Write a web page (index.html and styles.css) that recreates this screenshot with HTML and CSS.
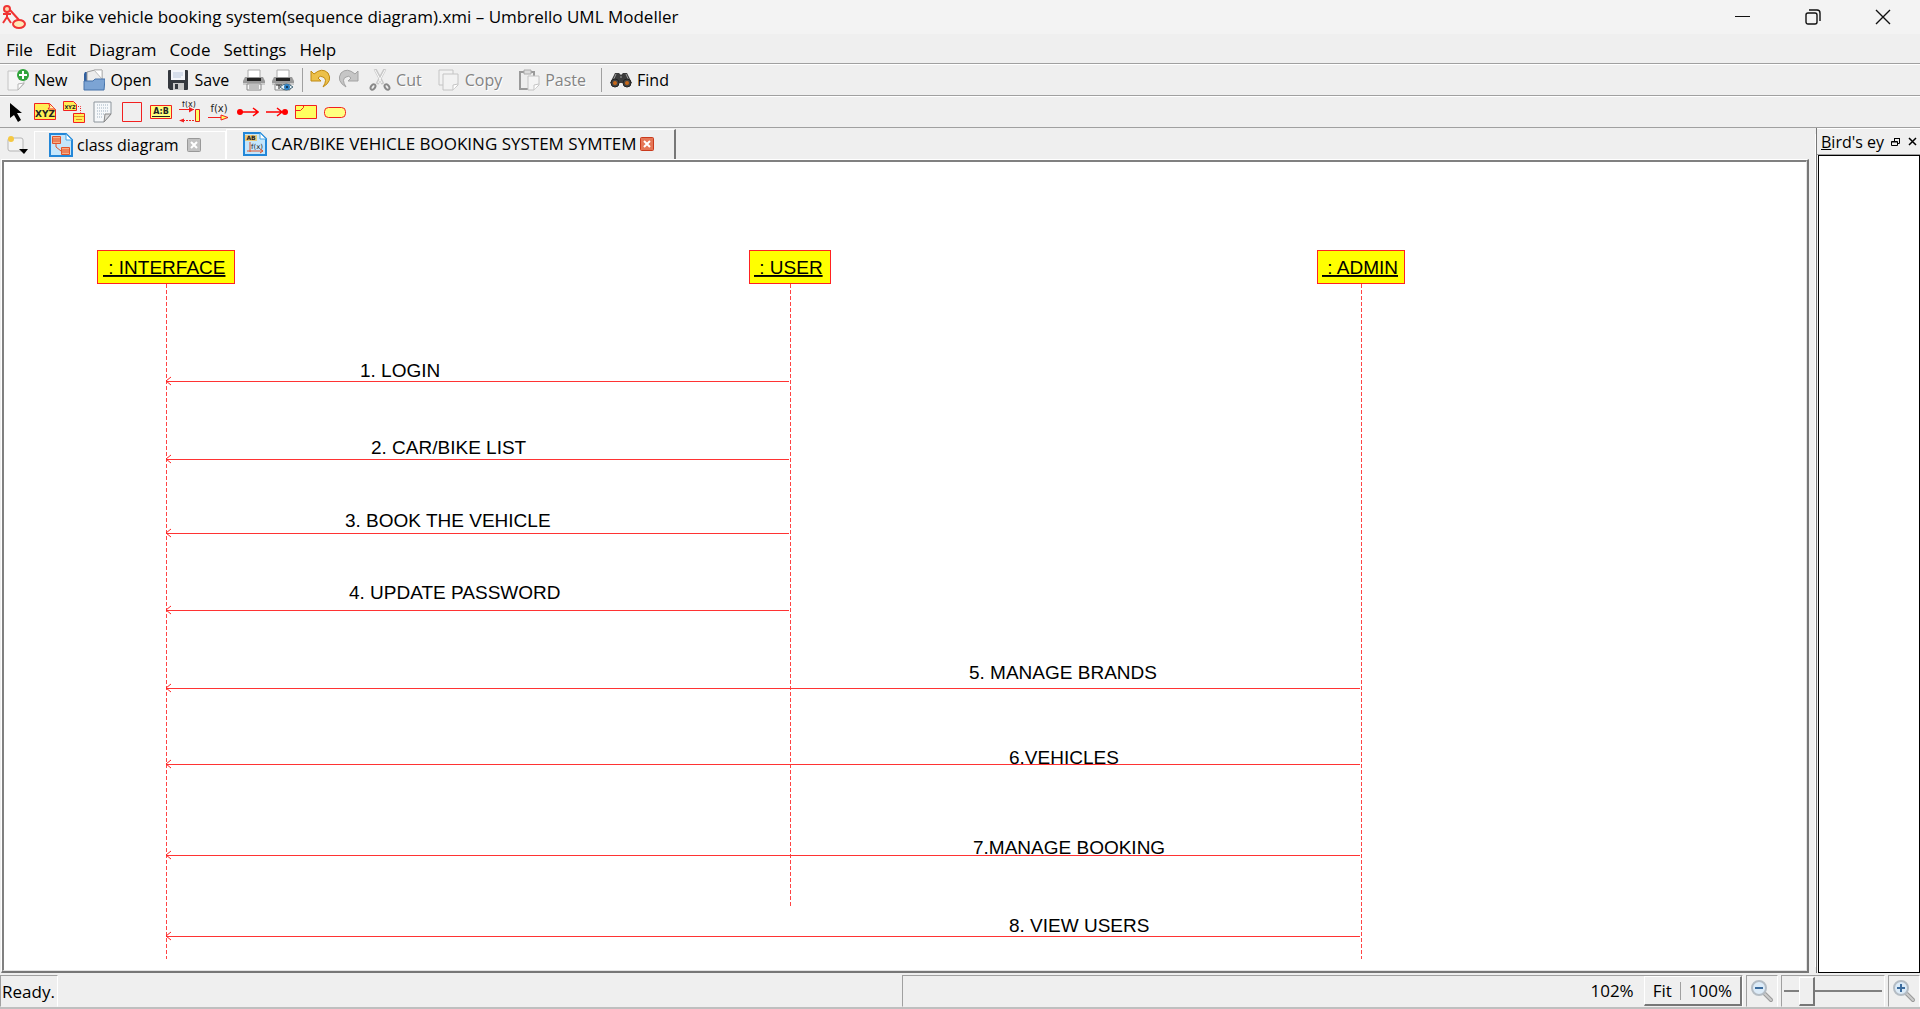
FILE: index.html
```html
<!DOCTYPE html>
<html lang="en">
<head>
<meta charset="utf-8">
<title>Umbrello UML Modeller</title>
<link rel="stylesheet" href="styles.css">
</head>
<body>
<header class="titlebar">
  <svg class="app-icon" width="24" height="24" viewBox="0 0 24 24" fill="none" stroke="#f03434" stroke-width="2"><circle cx="5" cy="4" r="3" fill="#ffd9b0"/><path d="M5 7v5M1 9h8M5 12l-4 6M5 12l4 6M8 5l9 10"/><ellipse cx="17" cy="19" rx="6" ry="4" fill="#ffe9b8" stroke-width="2"/></svg>
  <h1 class="title">car bike vehicle booking system(sequence diagram).xmi – Umbrello UML Modeller</h1>
  <div class="window-buttons">
    <button aria-label="Minimize"><svg width="16" height="16" viewBox="0 0 16 16" stroke="#111"><path d="M0 7.500h15"/></svg></button>
    <button aria-label="Restore"><svg width="16" height="16" viewBox="0 0 16 16" fill="none" stroke="#111" stroke-width="1.400"><rect x="1" y="4" width="11" height="11" rx="2"/><path d="M4 1h8q3 0 3 3v8"/></svg></button>
    <button aria-label="Close"><svg width="16" height="16" viewBox="0 0 16 16" stroke="#111" stroke-width="1.400"><path d="M1 1l14 14M15 1L1 15"/></svg></button>
  </div>
</header>

<nav class="menubar">
  <button>File</button><button>Edit</button><button>Diagram</button><button>Code</button><button>Settings</button><button>Help</button>
</nav>

<div class="toolbar" role="toolbar" aria-label="Main">
  <button class="labelled"><svg width="22" height="22" viewBox="0 0 22 22"><path d="M1 2h16v13l-6 6H1z" fill="#f5f5f5" stroke="#c4c4c4"/><path d="M17 14l-6 1v6z" fill="#fff" stroke="#b5b5b5"/><circle cx="16" cy="6" r="6" fill="#2fa33a"/><path d="M16 2v8M12 6h8" stroke="#fff" stroke-width="2"/></svg>New</button>
  <button class="labelled"><svg width="22" height="22" viewBox="0 0 22 22"><path d="M2 3h5v14H1V5z" fill="#2f5f9f"/><path d="M4 3l8-2h7v12H4z" fill="#ececec" stroke="#999"/><path d="M11 1h8v9z" fill="#fff" stroke="#bbb"/><path d="M1 12h9l2-2h10l-1 11H1z" fill="#7ca4d4" stroke="#4673aa"/></svg>Open</button>
  <button class="labelled"><svg width="22" height="22" viewBox="0 0 22 22"><path d="M1 2q0-1 1-1h18q1 0 1 1v18q0 1-1 1H3l-2-2z" fill="#34383e"/><path d="M4 1h14v10H4z" fill="#f3f6fb"/><path d="M6 4h10M6 6h10M6 8h8" stroke="#b8c6dc"/><path d="M6 14h11v7H6z" fill="#c9c9c9"/><path d="M8 15h3v5H8z" fill="#34383e"/></svg>Save</button>
  <button aria-label="Print"><svg width="22" height="22" viewBox="0 0 22 22"><path d="M5 1h12v8H5z" fill="#fff" stroke="#aaa"/><path d="M2 8h18l2 4v4H0v-4z" fill="#999"/><path d="M4 9h14v3H4z" fill="#222"/><path d="M0 14h22v2H0z" fill="#ccc"/><path d="M4 15h14v6H4z" fill="#f6f6f6" stroke="#888"/><path d="M6 17h10M6 19h10" stroke="#888"/></svg></button>
  <button aria-label="Print Preview"><svg width="22" height="22" viewBox="0 0 22 22"><path d="M5 1h12v8H5z" fill="#fff" stroke="#aaa"/><path d="M2 8h18l2 4v4H0v-4z" fill="#999"/><path d="M4 9h14v3H4z" fill="#222"/><path d="M0 14h22v2H0z" fill="#ccc"/><path d="M3 15h15v6H3z" fill="#f6f6f6" stroke="#888"/><path d="M4 16h6M7 16v4" stroke="#222"/><path d="M8 18q6-6 13 0-7 6-13 0z" fill="#e7f3fb" stroke="#467"/><circle cx="15" cy="18" r="3" fill="#2d7fc1"/><circle cx="15" cy="18" r="1" fill="#123"/></svg></button>
  <span class="separator"></span>
  <button aria-label="Undo"><svg width="22" height="22" viewBox="0 0 22 22"><path d="M2 2l3 3Q13-2 19 4q5 8-5 14 5-8 0-10-3-2-5 1l3 3H2z" fill="#ecc04a" stroke="#c08a12"/></svg></button>
  <button aria-label="Redo" disabled><svg width="22" height="22" viewBox="0 0 22 22"><path d="M20 2l-3 3Q9-2 3 4q-5 8 5 14-5-8 0-10 3-2 5 1l-3 3h10z" fill="#c6c6c6" stroke="#a3a3a3"/></svg></button>
  <button class="labelled" disabled><svg width="22" height="22" viewBox="0 0 22 22" fill="none"><path d="M6 0l8 15M16 0L8 15" stroke="#c8c8c8" stroke-width="3"/><path d="M6 1l7 13M16 1L9 14" stroke="#fafafa"/><ellipse cx="4" cy="18" rx="2" ry="3" stroke="#888" stroke-width="2" transform="rotate(35 4 18)"/><ellipse cx="18" cy="18" rx="2" ry="3" stroke="#888" stroke-width="2" transform="rotate(-35 18 18)"/></svg>Cut</button>
  <button class="labelled" disabled><svg width="22" height="22" viewBox="0 0 22 22" fill="#f2f2f2" stroke="#c4c4c4"><path d="M1 1h14v15H1z"/><path d="M5 5h15v11l-5 5H5z"/><path d="M20 15l-5 1v5" fill="#fff"/></svg>Copy</button>
  <button class="labelled" disabled><svg width="22" height="22" viewBox="0 0 22 22"><path d="M2 3h14v17H2z" fill="#eee" stroke="#9a9a9a" stroke-width="2"/><path d="M6 1h7v4H6z" fill="#ddd" stroke="#aaa"/><path d="M10 7h11v9l-5 5h-6z" fill="#f4f4f4" stroke="#c4c4c4"/><path d="M21 15l-5 1v5" fill="#fff" stroke="#c4c4c4"/></svg>Paste</button>
  <span class="separator"></span>
  <button class="labelled"><svg width="22" height="22" viewBox="0 0 22 22"><path d="M5 4h4l2 2 2-2h4l5 10H0z" fill="#3c3c3c"/><path d="M6 5l-3 7M16 5l3 7M10 8h2" stroke="#999"/><circle cx="5" cy="14" r="4" fill="#444" stroke="#222"/><circle cx="17" cy="14" r="4" fill="#444" stroke="#222"/><circle cx="5" cy="14" r="2" fill="#c8681a"/><circle cx="17" cy="14" r="2" fill="#c8681a"/></svg>Find</button>
</div>

<div class="toolbar" role="toolbar" aria-label="Diagram tools">
  <button aria-label="Select"><svg width="22" height="22" viewBox="0 0 22 22"><path d="M5 2v15l4-3 4 7 3-2-4-7h5z" fill="#000"/></svg></button>
  <button aria-label="Object"><svg width="22" height="22" viewBox="0 0 22 22"><path d="M.5 2.500h15l6 6v10H.5z" fill="#ffee55" stroke="#f22020"/><path d="M15 3q2 3-1 5h7" fill="#fff9b0" stroke="#f22020"/><text x="11" y="16" class="glyph" font-size="9">XYZ</text></svg></button>
  <button aria-label="Object relation"><svg width="22" height="22" viewBox="0 0 22 22"><path d="M.5.500h10l3 3v6H.5z" fill="#ffee55" stroke="#f22020"/><text x="7" y="8" class="glyph" font-size="5">XYZ</text><path d="M13 5.500h4.500v6" fill="none" stroke="#f22020" stroke-dasharray="1 1"/><path d="M10.500 12.500h11v9h-11z" fill="#ffee55" stroke="#f22020"/><path d="M11 15.500h10M13 18.500h6" stroke="#e58a20"/></svg></button>
  <button aria-label="Note"><svg width="22" height="22" viewBox="0 0 22 22"><path d="M2 1h17v12l-7 8H2z" fill="#f6f8fa" stroke="#8d959c"/><path d="M5 4h12M5 7h12M5 10h12M5 13h8M5 16h6" stroke="#9fb0bf" stroke-dasharray="1 1"/><path d="M19 13h-6l-1 8z" fill="#ddd" stroke="#888"/></svg></button>
  <button aria-label="Box"><svg width="22" height="22" viewBox="0 0 22 22"><path d="M1.500 1.500h19v19h-19z" fill="none" stroke="#f22020"/></svg></button>
  <button aria-label="Message label"><svg width="22" height="22" viewBox="0 0 22 22"><path d="M.5 4.500h21v13H.5z" fill="#ffff80" stroke="#f22020"/><text x="11" y="13" class="glyph" font-size="8">A:B</text><path d="M2 15.500h18" stroke="#222"/></svg></button>
  <button aria-label="Synchronous message"><svg width="22" height="22" viewBox="0 0 22 22"><text x="10" y="6" class="glyph light" font-size="8">f(x)</text><path d="M0 8.500h15" stroke="#f22020"/><path d="M10 6l5 2.500-5 3z" fill="#f22020"/><path d="M16.500 8.500h4v12h-4z" fill="#ffff60" stroke="#e02020"/><path d="M1 19.500h15" stroke="#f22020" stroke-dasharray="2 1"/><path d="M0 19.500l5-2v4z" fill="#f22020"/></svg></button>
  <button aria-label="Asynchronous message"><svg width="22" height="22" viewBox="0 0 22 22"><text x="11" y="11" class="glyph light" font-size="10">f(x)</text><path d="M0 16.500h20" stroke="#f22020"/><path d="M13 14l7 2.500-7 2.500z" fill="#ffff60" stroke="#f22020"/></svg></button>
  <button aria-label="Found message"><svg width="22" height="22" viewBox="0 0 22 22"><circle cx="3" cy="11" r="3" fill="#f00"/><path d="M3 11h18M16 7l5 4-5 4" fill="none" stroke="#f00" stroke-width="1.500"/></svg></button>
  <button aria-label="Lost message"><svg width="22" height="22" viewBox="0 0 22 22"><circle cx="19" cy="11" r="3" fill="#f00"/><path d="M0 11h16M11 7l5 4-5 4" fill="none" stroke="#f00" stroke-width="1.500"/></svg></button>
  <button aria-label="Combined fragment"><svg width="22" height="22" viewBox="0 0 22 22"><path d="M.5 4.500h21v13H.5z" fill="#ffff60" stroke="#f22020"/><path d="M.5 9.500h5l3-3v-2" fill="none" stroke="#f22020"/></svg></button>
  <button aria-label="Precondition"><svg width="22" height="22" viewBox="0 0 22 22"><rect x=".5" y="6.500" width="21" height="10" rx="4" fill="#ffff80" stroke="#f22020"/></svg></button>
</div>

<main class="workspace">
  <section class="editor">
    <div class="tabs" role="tablist">
      <button class="new-tab" aria-label="New diagram"><svg width="22" height="20" viewBox="0 0 22 20"><rect x="1" y="3" width="15" height="13" rx="2" fill="#f4f4f4" stroke="#b5b5b5"/><circle cx="4" cy="4" r="3" fill="#f5c842"/><path d="M12 14h9l-4 5z" fill="#000"/></svg></button>
      <div class="tab">
        <svg width="24" height="24" viewBox="0 0 24 24"><path d="M1 1h16l6 6v16H1z" fill="#c5e6fb" stroke="#2387d8" stroke-width="2"/><path d="M17 1v6h6z" fill="#fff" stroke="#4ba5e4"/><path d="M3.500 3.500h8v7h-8zM12.500 14.500h8v7h-8z" fill="#f8ae86" stroke="#e0542c"/><path d="M4 6h7M4 8h7M13 17h7M13 19h7M7 11v3l5 4" fill="none" stroke="#e0542c"/></svg>
        <button class="tab-label" role="tab">class diagram</button>
        <button class="tab-close" aria-label="Close class diagram"><svg width="14" height="14" viewBox="0 0 14 14"><rect x=".5" y=".5" width="13" height="13" rx="1" fill="#c2c2c2" stroke="#999"/><path d="M4 4l6 6M10 4l-6 6" stroke="#fff" stroke-width="2"/></svg></button>
      </div>
      <div class="tab active">
        <svg width="24" height="24" viewBox="0 0 24 24"><path d="M1 1h16l6 6v16H1z" fill="#c5e6fb" stroke="#2387d8" stroke-width="2"/><path d="M17 1v6h6z" fill="#fff" stroke="#4ba5e4"/><path d="M2 3h12v6H2z" fill="#e8c87a"/><text x="8" y="8" class="glyph" font-size="6">AB</text><text x="14" y="17" class="glyph light" font-size="7">f(x)</text><path d="M7 10v10M4 19h16M17 17l3 2-3 2" fill="none" stroke="#e0542c"/></svg>
        <button class="tab-label" role="tab" aria-selected="true">CAR/BIKE VEHICLE BOOKING SYSTEM SYMTEM</button>
        <button class="tab-close" aria-label="Close sequence diagram"><svg width="14" height="14" viewBox="0 0 14 14"><rect x=".5" y=".5" width="13" height="13" rx="1" fill="#e57656" stroke="#c93a1c"/><path d="M4 4l6 6M10 4l-6 6" stroke="#fff" stroke-width="2"/></svg></button>
      </div>
    </div>
    <div class="pane">
      <svg class="canvas" role="img" aria-label="Sequence diagram">
        <defs><marker id="arrow" viewBox="0 0 8 10" refX="1" refY="5" markerWidth="8" markerHeight="10" markerUnits="userSpaceOnUse"><path d="M6 1L1 5l5 4" class="head"/></marker></defs>
        <g class="objects">
          <rect x="93" y="88" width="137" height="33"/><rect x="745" y="88" width="81" height="33"/><rect x="1313" y="88" width="87" height="33"/>
        </g>
        <g class="names">
          <text x="99" y="112"> : INTERFACE</text><text x="750" y="112"> : USER</text><text x="1318" y="112"> : ADMIN</text>
        </g>
        <g class="lifelines">
          <path d="M162 122v675"/><path d="M786 122v624"/><path d="M1357 122v675"/>
        </g>
        <g class="messages">
          <path d="M162 219H785"/><path d="M162 297H785"/><path d="M162 371H785"/><path d="M162 448H785"/>
          <path d="M162 526H1356"/><path d="M162 602H1356"/><path d="M162 693H1356"/><path d="M162 774H1356"/>
        </g>
        <g class="captions">
          <text x="356" y="215">1. LOGIN</text><text x="367" y="292">2. CAR/BIKE LIST</text><text x="341" y="365">3. BOOK THE VEHICLE</text><text x="345" y="437">4. UPDATE PASSWORD</text>
          <text x="965" y="517">5. MANAGE BRANDS</text><text x="1005" y="602">6.VEHICLES</text><text x="969" y="692">7.MANAGE BOOKING</text><text x="1005" y="770">8. VIEW USERS</text>
        </g>
      </svg>
    </div>
  </section>
  <aside class="dock">
    <div class="dock-head">
      <h2><u>B</u>ird's ey</h2>
      <button aria-label="Float"><svg width="10" height="10" viewBox="0 0 10 10" fill="none" stroke="#000"><path d="M3 1.500h6M.5 4.500h6v4h-6zM3.500 4V1.500h5v5H7M.5 5h6"/></svg></button>
      <button aria-label="Close panel"><svg width="10" height="10" viewBox="0 0 10 10" stroke="#000" stroke-width="1.500"><path d="M1 1l7 7M8 1L1 8"/></svg></button>
    </div>
    <div class="birdview"></div>
  </aside>
</main>

<footer class="statusbar">
  <div class="cell ready">Ready.</div>
  <div class="spacer"></div>
  <div class="cell zoom-level"><span>102%</span>
    <div class="zoom-buttons"><button>Fit</button><button>100%</button></div>
  </div>
  <button class="cell zoom" aria-label="Zoom out"><svg width="24" height="24" viewBox="0 0 24 24"><path d="M15 15l6 6" stroke="#999" stroke-width="4" stroke-linecap="round"/><path d="M15 15l6 6" stroke="#ccc" stroke-width="2" stroke-linecap="round"/><circle cx="9" cy="9" r="7" fill="#dcebf8" stroke="#b4bcc4" stroke-width="2"/><path d="M5 9h8" stroke="#3c6c9e" stroke-width="2"/></svg></button>
  <label class="cell slider"><input type="range" min="0" max="100" value="18" aria-label="Zoom"></label>
  <button class="cell zoom" aria-label="Zoom in"><svg width="24" height="24" viewBox="0 0 24 24"><path d="M15 15l6 6" stroke="#999" stroke-width="4" stroke-linecap="round"/><path d="M15 15l6 6" stroke="#ccc" stroke-width="2" stroke-linecap="round"/><circle cx="9" cy="9" r="7" fill="#dcebf8" stroke="#b4bcc4" stroke-width="2"/><path d="M5 9h8M9 5v8" stroke="#3c6c9e" stroke-width="2"/></svg></button>
</footer>
</body>
</html>
```
FILE: styles.css
```css
* { box-sizing: border-box; }
body {
  margin: 0;
  min-height: 100vh;
  display: flex;
  flex-direction: column;
  background: #efefef;
  color: #000;
  font: 17px/22px "Open Sans", "Noto Sans", sans-serif;
}
button { border: 0; padding: 0; background: none; color: inherit; font: inherit; }
button:disabled { color: #838383; text-shadow: 1px 1px 0 #fff; }
svg { display: block; flex: none; }

.titlebar { display: flex; align-items: center; height: 34px; padding: 0 2px; background: #f3f3f3; }
.app-icon { margin-right: 6px; }
.title { flex: 1; margin: 0; font-size: 17px; font-weight: 400; }
.window-buttons { display: flex; }
.window-buttons button { display: grid; place-items: center; width: 70px; height: 34px; }

.menubar { display: flex; height: 29px; }
.menubar button { padding: 0 7px 0 6px; line-height: 31px; }

.toolbar { display: flex; align-items: center; height: 32px; padding: 0 2px; border-top: 1px solid #a0a0a0; box-shadow: inset 0 1px #fff; }
.toolbar button { display: flex; align-items: center; gap: 5px; height: 30px; padding: 0 4px 0 3px; font-size: 16px; }
.toolbar .labelled { padding: 0 11px 0 5px; }
.separator { width: 1px; height: 24px; margin: 0 3px 0 4px; background: #a0a0a0; }
.glyph { font-family: "DejaVu Sans", sans-serif; font-weight: 700; text-anchor: middle; fill: #222; }
.glyph.light { font-weight: 400; }

.workspace { flex: 1; display: flex; border-top: 1px solid #a0a0a0; }
.editor { flex: 1; min-width: 0; display: flex; flex-direction: column; }
.tabs { display: flex; height: 31px; padding-left: 7px; }
.new-tab { width: 27px; padding-top: 2px; }
.tab { display: flex; align-items: center; width: 192px; margin-top: 3px; padding: 0 0 2px 14px; border: 1px solid #fff; border-bottom: 0; }
.tab.active { width: auto; margin-top: 1px; padding: 0 20px 2px 16px; border-right: 2px solid #777; }
.tab-label { margin: 0 8px 0 4px; font-size: 16px; white-space: nowrap; }
.tab.active .tab-label { margin-right: 3px; font-size: 17px; }

.pane { flex: 1; display: flex; margin: 0 0 0 1px; border: 1px solid #fff; border-right: 2px solid #777; border-bottom: 2px solid #777; }
.canvas { flex: 1; min-width: 0; height: auto; min-height: 808px; background: #fff; border: 1px solid; border-width: 2px 1px 1px 2px; border-color: #808080 #e3e3e3 #e3e3e3 #808080; overflow: hidden; font: 19px "Liberation Sans", Arial, sans-serif; }
.objects rect { fill: #ff0; stroke: #f22; }
.objects, .lifelines, .messages { shape-rendering: crispEdges; }
.names text { white-space: pre; text-decoration: underline; }
.lifelines path { fill: none; stroke: #f44; stroke-dasharray: 4 2; }
.messages path { stroke: #f33; marker-start: url(#arrow); }
.head { fill: none; stroke: #f22; shape-rendering: auto; }

.dock { width: 104px; margin-left: 7px; display: flex; flex-direction: column; border-left: 1px solid #777; box-shadow: -7px 0 0 -6px #fff; }
.dock-head { display: flex; align-items: center; gap: 7px; height: 27px; padding: 0 4px; border-bottom: 1px solid #a0a0a0; border-top: 1px solid #fff; }
.dock-head h2 { flex: 1; margin: 0; white-space: nowrap; font-size: 16px; font-weight: 400; }
.birdview { flex: 1; background: #fff; border: 1px solid #000; margin-left: 1px; }

.statusbar { display: flex; gap: 3px; height: 36px; padding-top: 2px; border-bottom: 2px solid #bfbfbf; }
.cell { height: 32px; border: 1px solid #a0a0a0; border-right-color: #fff; border-bottom-color: #efefef; }
.ready { padding: 5px 2px 0 1px; }
.spacer { flex: 1; }
.zoom-level { flex: 1; display: flex; justify-content: flex-end; align-items: center; gap: 10px; }
.zoom-buttons { display: flex; align-items: center; height: 30px; border: 1px solid #fff; border-right: 2px solid #777; border-bottom: 2px solid #777; }
.zoom-buttons button { padding: 0 8px; }
.zoom-buttons button + button { border-left: 1px solid #a0a0a0; line-height: 18px; }
.zoom { width: 32px; display: grid; place-items: center; }
.slider { width: 104px; display: flex; align-items: center; }
.slider input { appearance: none; width: 100%; height: 29px; margin: 0 2px; background: linear-gradient(#808080, #808080) center / 100% 2px no-repeat; }
.slider input::-webkit-slider-thumb { appearance: none; width: 16px; height: 29px; background: #efefef; border: 1px solid #fff; border-right: 2px solid #777; border-bottom: 2px solid #777; }
```
